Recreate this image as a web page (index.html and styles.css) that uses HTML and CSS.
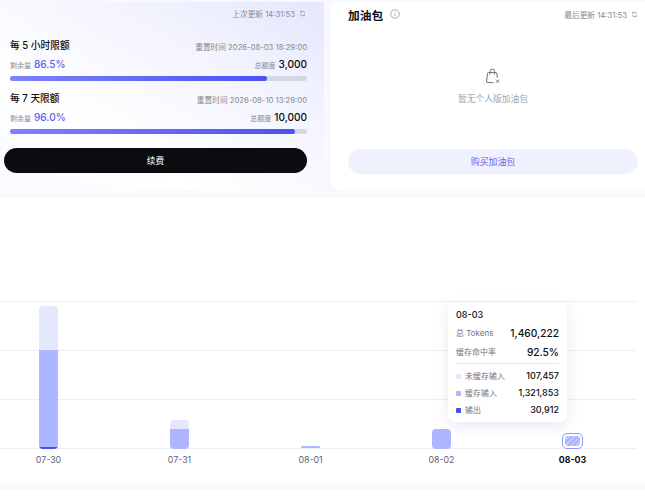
FILE: index.html
```html
<!DOCTYPE html>
<html lang="zh-CN">
<head>
    <meta charset="UTF-8">
    <title>用量</title>
    <link rel="stylesheet" href="styles.css">
</head>
<body>

    <!-- Top cards -->
    <div class="top-row">
        <section class="plan-card">
            <div class="updated plan-updated">
                <span>上次更新 14:31:53</span>
                <svg class="refresh" viewBox="0 0 16 16"><path d="M13 6.5A5.2 5.2 0 0 0 3.6 5M3 9.5A5.2 5.2 0 0 0 12.4 11M3.4 2.6V5.2H6M12.6 13.4V10.8H10"/></svg>
            </div>

            <div class="quota quota-first">
                <div class="quota-head">
                    <h3>每 5 小时限额</h3>
                    <span class="reset">重置时间 2026-08-03 18:29:00</span>
                </div>
                <div class="quota-nums">
                    <span class="num-label">剩余量 <b class="percent">86.5%</b></span>
                    <span class="num-label">总额度 <b class="total">3,000</b></span>
                </div>
                <div class="track"><div class="fill" style="width: 86.5%"></div></div>
            </div>

            <div class="quota">
                <div class="quota-head">
                    <h3>每 7 天限额</h3>
                    <span class="reset">重置时间 2026-08-10 13:29:00</span>
                </div>
                <div class="quota-nums">
                    <span class="num-label">剩余量 <b class="percent">96.0%</b></span>
                    <span class="num-label">总额度 <b class="total">10,000</b></span>
                </div>
                <div class="track"><div class="fill" style="width: 96%"></div></div>
            </div>

            <button class="renew">续费</button>
        </section>

        <section class="pack-card">
            <div class="pack-head">
                <h2>加油包</h2>
                <svg class="info" viewBox="0 0 16 16"><circle cx="8" cy="8" r="6.8"/><path d="M8 7.4v3.8M8 4.6v1.2"/></svg>
                <div class="updated pack-updated">
                    <span>最后更新 14:31:53</span>
                    <svg class="refresh" viewBox="0 0 16 16"><path d="M13 6.5A5.2 5.2 0 0 0 3.6 5M3 9.5A5.2 5.2 0 0 0 12.4 11M3.4 2.6V5.2H6M12.6 13.4V10.8H10"/></svg>
                </div>
            </div>
            <div class="empty">
                <svg class="bag" viewBox="0 0 16 16"><path d="M8.4 14.6H3a1.4 1.4 0 0 1-1.4-1.6L2.6 5.2a.8.8 0 0 1 .8-.7h7.6a.8.8 0 0 1 .8.7l.5 4.6M5 6.6V3.4a2.3 2.3 0 0 1 4.6 0v3.2"/><path d="M11 11.6l3.2 3.2M14.2 11.6L11 14.8"/></svg>
                <p>暂无个人版加油包</p>
            </div>
            <button class="buy">购买加油包</button>
        </section>
    </div>

    <!-- Usage chart -->
    <section class="chart-card">
        <div class="plot">
            <div class="grid-row"></div>
            <div class="grid-row"></div>
            <div class="grid-row"></div>

            <div class="bars">
                <div class="bar-col">
                    <div class="bar">
                        <div class="seg seg-light" style="height: 44px"></div>
                        <div class="seg seg-mid" style="height: 97px"></div>
                        <div class="seg seg-dark" style="height: 2px"></div>
                    </div>
                </div>
                <div class="bar-col">
                    <div class="bar">
                        <div class="seg seg-light" style="height: 9px"></div>
                        <div class="seg seg-mid" style="height: 20px"></div>
                    </div>
                </div>
                <div class="bar-col">
                    <div class="bar bar-tiny">
                        <div class="seg seg-mid" style="height: 2px"></div>
                    </div>
                </div>
                <div class="bar-col">
                    <div class="bar">
                        <div class="seg seg-mid" style="height: 20px"></div>
                    </div>
                </div>
                <div class="bar-col">
                    <div class="bar bar-active">
                        <div class="seg seg-hatch" style="height: 10px"></div>
                    </div>
                </div>
            </div>

            <div class="tooltip">
                <div class="tip-date">08-03</div>
                <div class="tip-row tip-big tip-total"><span>总 Tokens</span><b>1,460,222</b></div>
                <div class="tip-row tip-big tip-rate"><span>缓存命中率</span><b>92.5%</b></div>
                <div class="tip-row tip-item"><span><i class="dot dot-light"></i>未缓存输入</span><b>107,457</b></div>
                <div class="tip-row tip-item"><span><i class="dot dot-mid"></i>缓存输入</span><b>1,321,853</b></div>
                <div class="tip-row tip-item"><span><i class="dot dot-dark"></i>输出</span><b>30,912</b></div>
            </div>
        </div>

        <div class="labels">
            <span>07-30</span>
            <span>07-31</span>
            <span>08-01</span>
            <span>08-02</span>
            <span class="label-active">08-03</span>
        </div>
    </section>

    <div class="next-card"></div>

</body>
</html>
```

FILE: styles.css
```css
html, body {
    height: 100%;
}
body {
    margin: 0;
    padding-top: 2px;
    box-sizing: border-box;
    overflow: hidden;
    background-color: #f8f9fe;
    color: #0b0c10;
    font-family: Inter, "Noto Sans CJK SC", sans-serif;
}
button {
    font-family: inherit;
    border: none;
    cursor: pointer;
}
h2, h3, p {
    margin: 0;
}

/* Top cards */
.top-row {
    display: flex;
    gap: 7px;
    height: 189px;
}
.plan-card {
    width: 324px;
    box-sizing: border-box;
    padding: 4px 17px 0 0;
    border-radius: 0 0 12px 0;
    background: linear-gradient(210deg, #e4e7fd 0%, #f4f5fe 35%, #ffffff 70%, #f9faff 100%);
}
.pack-card {
    flex: 1;
    display: flex;
    flex-direction: column;
    padding: 0 7px 17px 17px;
    border-radius: 0 0 0 12px;
    background-color: #fff;
}
.updated {
    display: flex;
    align-items: center;
    gap: 4px;
    font-size: 7.7px;
    color: #868a94;
}
.refresh {
    width: 7px;
    height: 7px;
    fill: none;
    stroke: #7c808a;
    stroke-width: 1.5;
}
.plan-updated {
    justify-content: flex-end;
    height: 15px;
    padding-right: 1px;
}

/* Quota blocks */
.quota {
    padding-left: 10px;
    margin-top: 10.3px;
}
.quota-first {
    margin-top: 17px;
}
.quota-head, .quota-nums {
    display: flex;
    justify-content: space-between;
    align-items: center;
}
.quota-head h3 {
    font-size: 9.7px;
    font-weight: 500;
    line-height: 16px;
}
.reset {
    font-size: 7.7px;
    color: #868a94;
}
.quota-nums {
    height: 20px;
}
.num-label {
    font-size: 7px;
    color: #868a94;
}
.percent {
    margin-left: 1px;
    font-size: 10.1px;
    font-weight: 500;
    color: #5d5ff5;
}
.total {
    margin-left: 1px;
    font-size: 10.1px;
    font-weight: 500;
    color: #0b0c10;
}
.track {
    height: 5px;
    margin-top: 2px;
    border-radius: 3px;
    background-color: #d5d8e2;
}
.fill {
    height: 100%;
    border-radius: 3px;
    background: linear-gradient(90deg, #7c83fb, #4f50f5);
}
.renew {
    display: block;
    width: 303px;
    height: 25px;
    margin: 14px 0 0 4px;
    border-radius: 13px;
    background-color: #0b0c10;
    color: #fff;
    font-size: 8.7px;
}

/* Pack card */
.pack-head {
    display: flex;
    align-items: center;
    height: 24px;
}
.pack-head h2 {
    font-size: 11.7px;
    font-weight: 700;
}
.info {
    width: 10px;
    height: 10px;
    margin-left: 7px;
    fill: none;
    stroke: #8b8f99;
    stroke-width: 1.2;
}
.pack-updated {
    margin-left: auto;
}
.empty {
    flex: 1;
    display: flex;
    flex-direction: column;
    align-items: center;
    padding-top: 42px;
}
.bag {
    width: 16px;
    height: 16px;
    fill: none;
    stroke: #6e7280;
    stroke-width: 1;
}
.empty p {
    margin-top: 9px;
    font-size: 8.75px;
    line-height: 13px;
    color: #a0a4b3;
}
.buy {
    height: 25px;
    border-radius: 13px;
    background-color: #f0f1fe;
    color: #6a62f2;
    font-size: 8.9px;
}

/* Chart */
.chart-card {
    height: 285px;
    margin-top: 7px;
    background-color: #fff;
    padding-top: 103px;
    box-sizing: border-box;
    overflow: hidden;
}
.plot {
    position: relative;
    width: 637px;
}
.grid-row {
    height: 48px;
    border-top: 1px solid #eeeff2;
}
.grid-row:nth-child(3) {
    border-bottom: 1px solid #eeeff2;
}
.bars {
    position: absolute;
    left: -17px;
    right: -1px;
    bottom: 0;
    display: flex;
    align-items: flex-end;
}
.bar-col {
    flex: 1;
    display: flex;
    justify-content: center;
}
.bar {
    width: 19px;
    border-radius: 4px;
    overflow: hidden;
}
.bar-tiny {
    margin-bottom: 1px;
    border-radius: 1px;
}
.seg-light {
    background-color: #e5e7fd;
}
.seg-mid {
    background-color: #adb6fe;
}
.seg-dark {
    background-color: #4a4cf0;
}
.seg-hatch {
    border-radius: 3px;
    background: repeating-linear-gradient(135deg, #aab2fe 0 2px, #c4cafe 2px 4px);
}
.bar-active {
    width: 21px;
    box-sizing: border-box;
    padding: 2px;
    border: 1px solid #9096fb;
    border-radius: 5px;
}
.labels {
    display: flex;
    width: 655px;
    margin-left: -17px;
    margin-top: 5px;
    font-size: 8.8px;
    line-height: 12px;
    color: #5f636e;
}
.labels span {
    flex: 1;
    text-align: center;
}
.labels .label-active {
    font-weight: 700;
    color: #0b0c10;
}

/* Tooltip */
.tooltip {
    position: absolute;
    left: 448px;
    top: 1px;
    width: 119px;
    height: 120px;
    box-sizing: border-box;
    padding: 6px 8px 0 8px;
    border-radius: 7px;
    background-color: #fff;
    box-shadow: 0 4px 14px rgba(90, 100, 160, 0.14);
}
.tip-date {
    font-size: 9px;
    font-weight: 500;
    line-height: 14px;
}
.tip-row {
    display: flex;
    justify-content: space-between;
    align-items: center;
}
.tip-row span {
    color: #70747f;
    font-size: 8px;
}
.tip-big b {
    font-size: 10.2px;
    font-weight: 500;
}
.tip-total {
    height: 19px;
    margin-top: 1px;
}
.tip-rate {
    height: 19px;
    padding-bottom: 2px;
    border-bottom: 1px solid #e6e8ee;
    margin-bottom: 2.5px;
}
.tip-item {
    height: 17px;
}
.tip-item b {
    font-size: 9px;
    font-weight: 500;
}
.dot {
    display: inline-block;
    width: 5px;
    height: 5px;
    margin-right: 4px;
    border-radius: 1px;
    vertical-align: 0;
}
.dot-light {
    background-color: #e5e7fd;
}
.dot-mid {
    background-color: #adb6fe;
}
.dot-dark {
    background-color: #4a4cf0;
}

.next-card {
    height: 20px;
    margin-top: 7px;
    background-color: #fff;
}
```
